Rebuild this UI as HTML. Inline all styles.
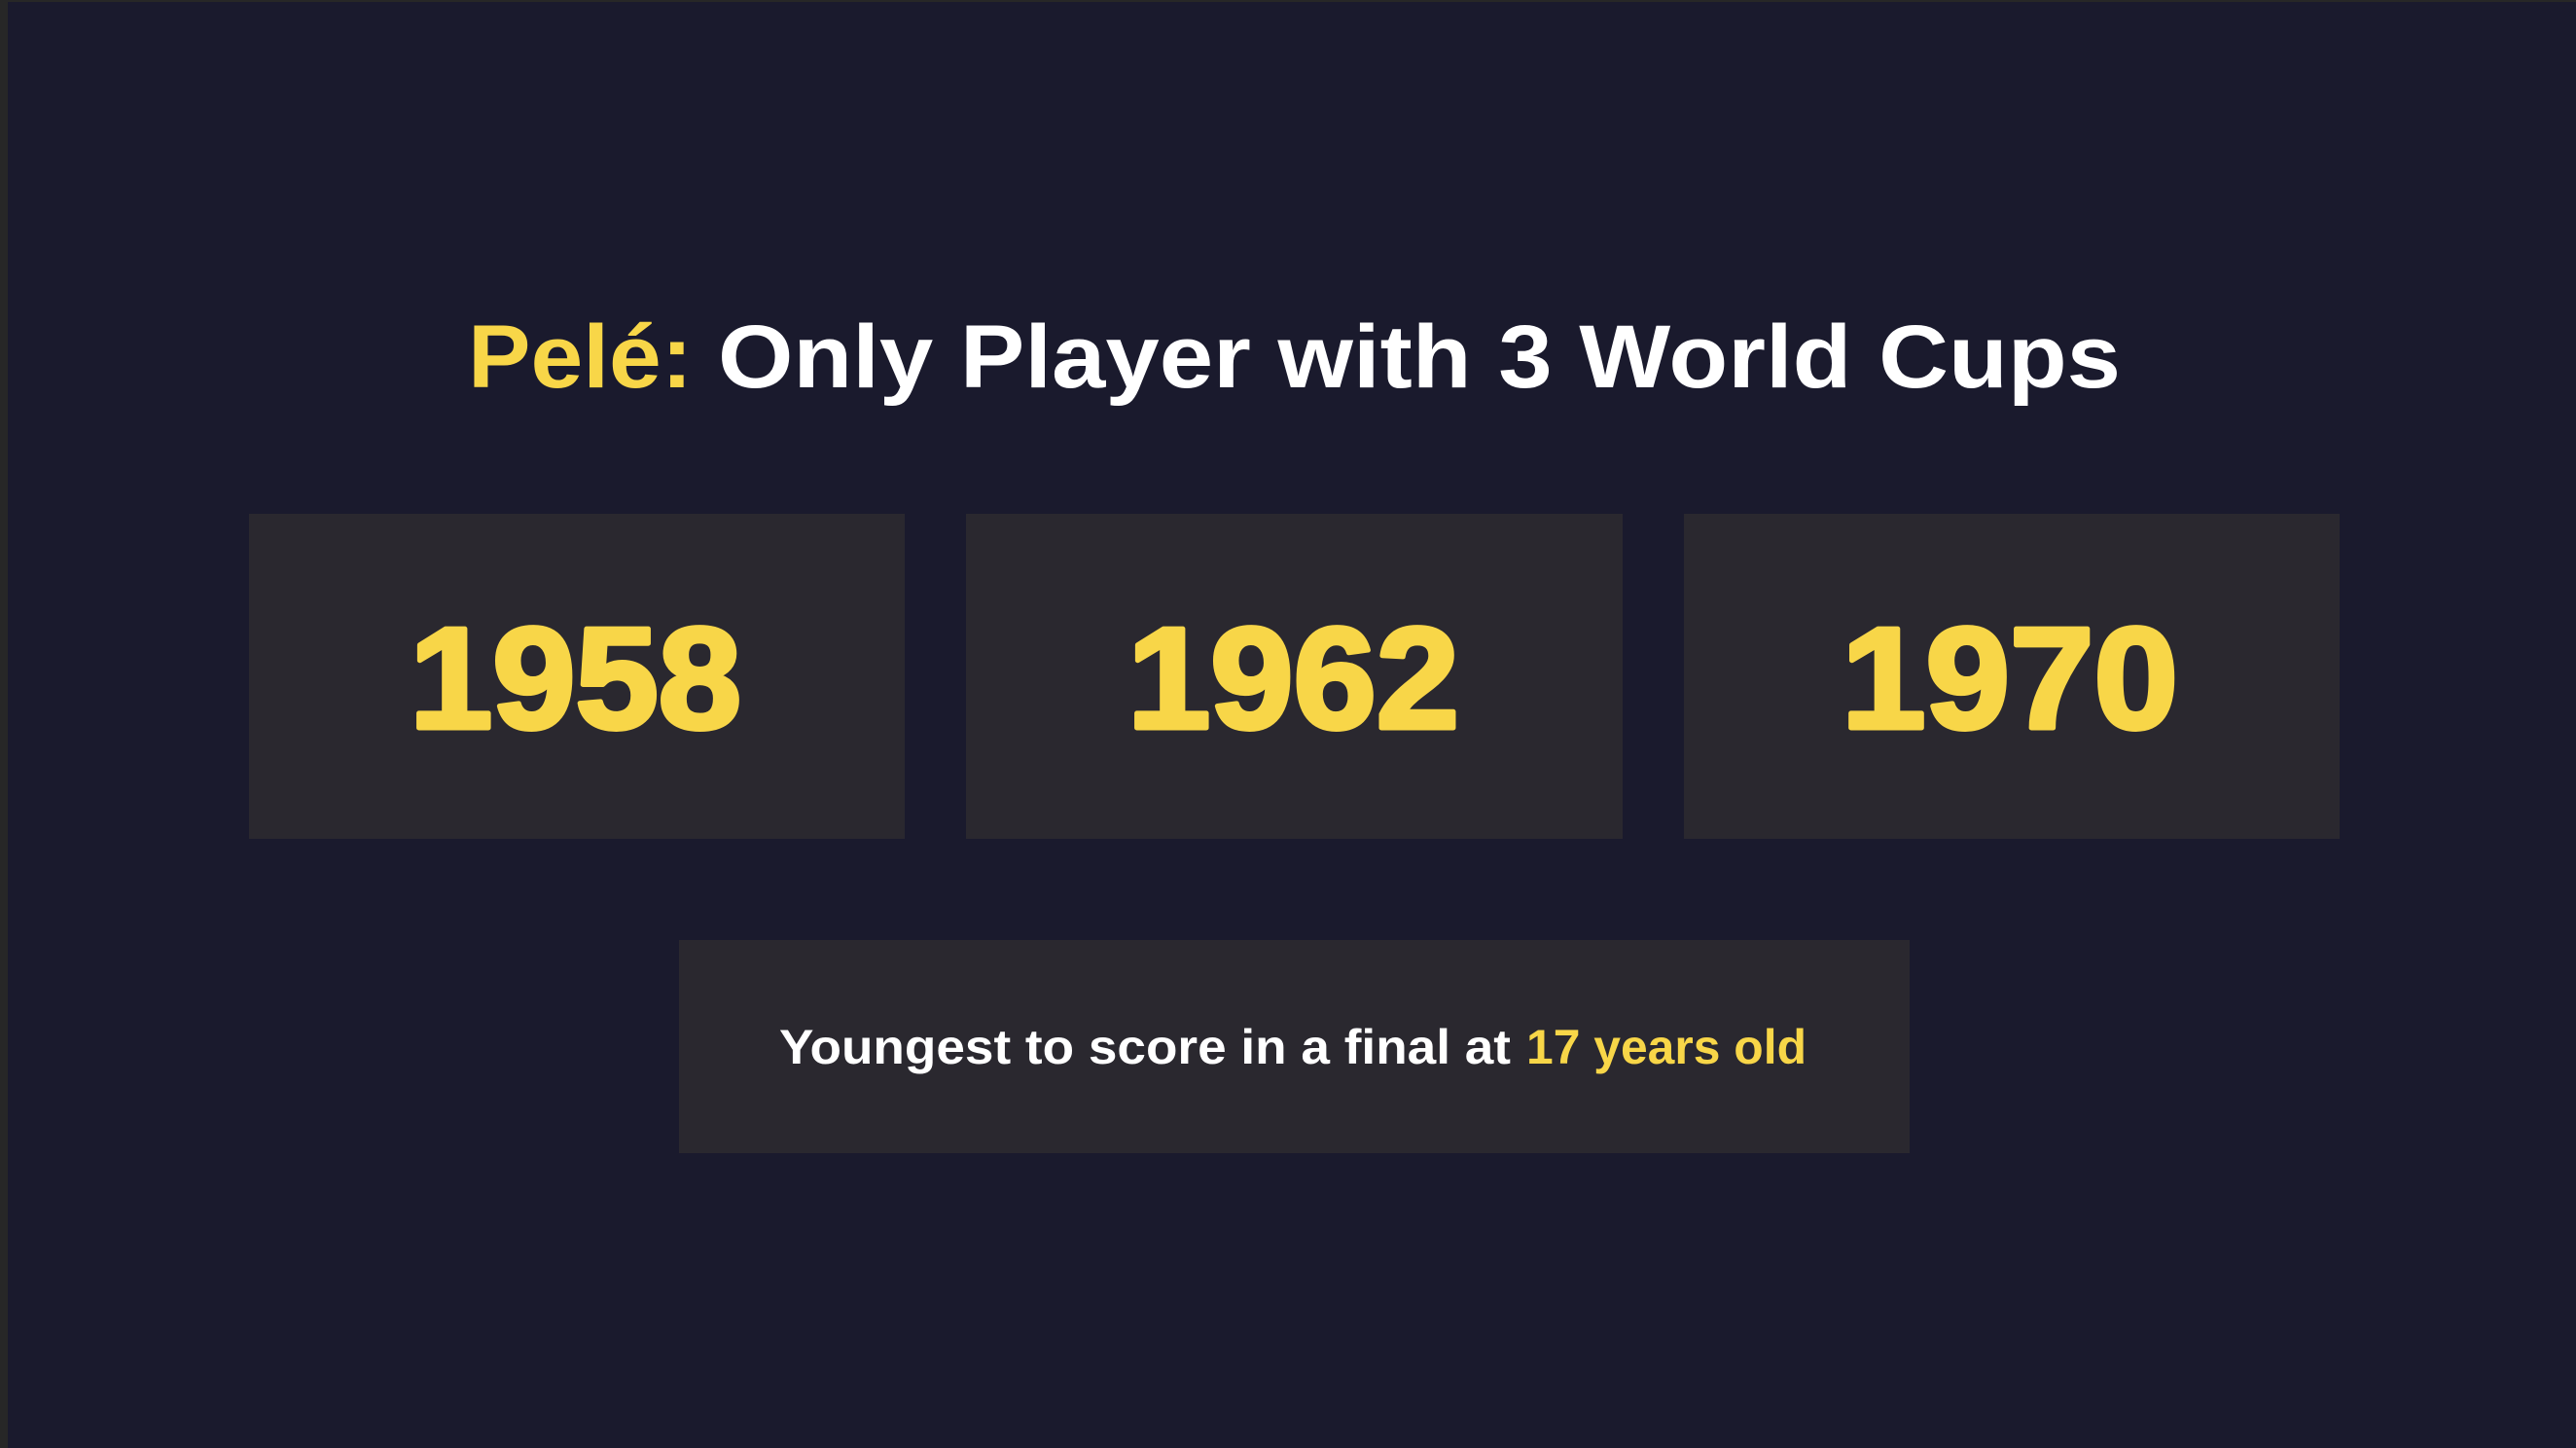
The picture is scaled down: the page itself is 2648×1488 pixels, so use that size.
<!DOCTYPE html>
<html><head><meta charset="utf-8"><style>
html,body{margin:0;padding:0;background:#1a1a2d;}
svg{display:block;}
</style></head><body>
<svg width="2648" height="1488" viewBox="0 0 2648 1488" xmlns="http://www.w3.org/2000/svg" font-family="Liberation Sans, sans-serif" font-weight="bold">
<rect x="0" y="0" width="2648" height="1488" fill="#1a1a2d"/>
<rect x="0" y="0" width="8" height="1488" fill="#272727"/>
<rect x="0" y="0" width="2648" height="2" fill="#272727"/>
<text y="398" font-size="92"><tspan x="481" fill="#f8d648" textLength="231" lengthAdjust="spacingAndGlyphs">Pelé:</tspan><tspan x="738" fill="#ffffff" textLength="1442" lengthAdjust="spacingAndGlyphs">Only Player with 3 World Cups</tspan></text>
<rect x="256" y="528" width="674" height="334" fill="#2a282f"/>
<rect x="993" y="528" width="675" height="334" fill="#2a282f"/>
<rect x="1731" y="528" width="674" height="334" fill="#2a282f"/>
<g font-size="148" fill="#f8d648" stroke="#f8d648" stroke-width="5" stroke-linejoin="round">
<text x="421" y="748" textLength="341" lengthAdjust="spacingAndGlyphs">1958</text>
<text x="1159" y="748" textLength="341" lengthAdjust="spacingAndGlyphs">1962</text>
<text x="1893" y="748" textLength="346" lengthAdjust="spacingAndGlyphs">1970</text>
</g>
<rect x="698" y="966" width="1265" height="219" fill="#2a282f"/>
<text y="1093" font-size="50"><tspan x="801" fill="#ffffff" textLength="752" lengthAdjust="spacingAndGlyphs">Youngest to score in a final at</tspan><tspan x="1569" fill="#f8d648" textLength="288" lengthAdjust="spacingAndGlyphs">17 years old</tspan></text>
</svg>
</body></html>
